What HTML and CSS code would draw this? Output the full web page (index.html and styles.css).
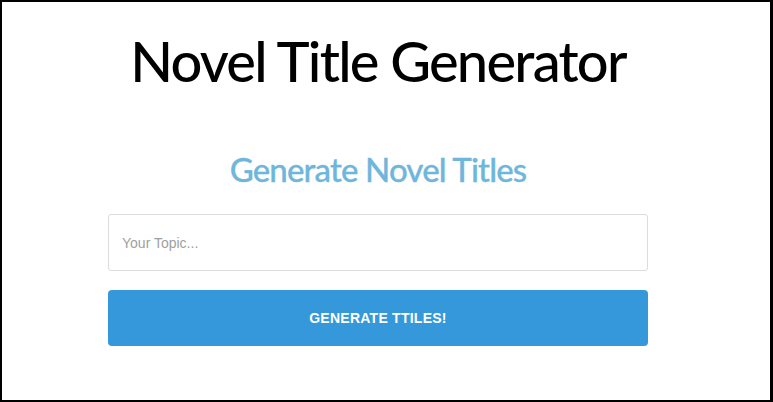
FILE: index.html
```html
<!DOCTYPE html>
<html>
<head>
<meta charset="utf-8">
<link rel="stylesheet" href="styles.css">
</head>
<body>
<div class="frame">
  <div class="page">
    <h1 class="title">Novel Title Generator</h1>
    <h2 class="subtitle">Generate Novel Titles</h2>
    <form class="form">
      <input class="topic" type="text" placeholder="Your Topic...">
      <button class="btn" type="button">GENERATE TTILES!</button>
    </form>
  </div>
</div>
</body>
</html>
```
FILE: styles.css
```css
html, body {
  margin: 0;
  padding: 0;
  background: #fff;
}
.frame {
  box-sizing: border-box;
  width: 773px;
  height: 402px;
  border-style: solid;
  border-color: #000;
  border-width: 2px 3px 2px 2px;
  background: #fff;
  overflow: hidden;
}
.page {
  width: 752px;
  display: flex;
  flex-direction: column;
  align-items: center;
}
.title {
  margin: 23px 0 0;
  font-family: Lato, "Open Sans", sans-serif;
  font-weight: 500;
  font-size: 56px;
  line-height: 72px;
  color: #000;
  letter-spacing: -1.75px;
}
.subtitle {
  margin: 50px 0 0;
  font-family: Lato, "Open Sans", sans-serif;
  font-weight: 500;
  font-size: 33px;
  line-height: 44px;
  color: #6fb6dc;
  letter-spacing: -0.85px;
  -webkit-text-stroke: 0.3px #6fb6dc;
}
.form {
  margin-top: 23px;
  width: 540px;
  display: flex;
  flex-direction: column;
  gap: 19px;
}
.topic {
  box-sizing: border-box;
  width: 540px;
  height: 57px;
  border: 1px solid #dcdcdc;
  border-radius: 3px;
  padding: 0 13px;
  font-family: "Liberation Sans", Arial, sans-serif;
  font-size: 14px;
  color: #333;
  outline: none;
}
.topic::placeholder {
  color: #a0a0a0;
}
.btn {
  box-sizing: border-box;
  width: 540px;
  height: 56px;
  border: none;
  border-radius: 4px;
  background: #3498db;
  color: #fff;
  font-family: "Liberation Sans", Arial, sans-serif;
  font-weight: 700;
  font-size: 14px;
  letter-spacing: 0.25px;
}
```
